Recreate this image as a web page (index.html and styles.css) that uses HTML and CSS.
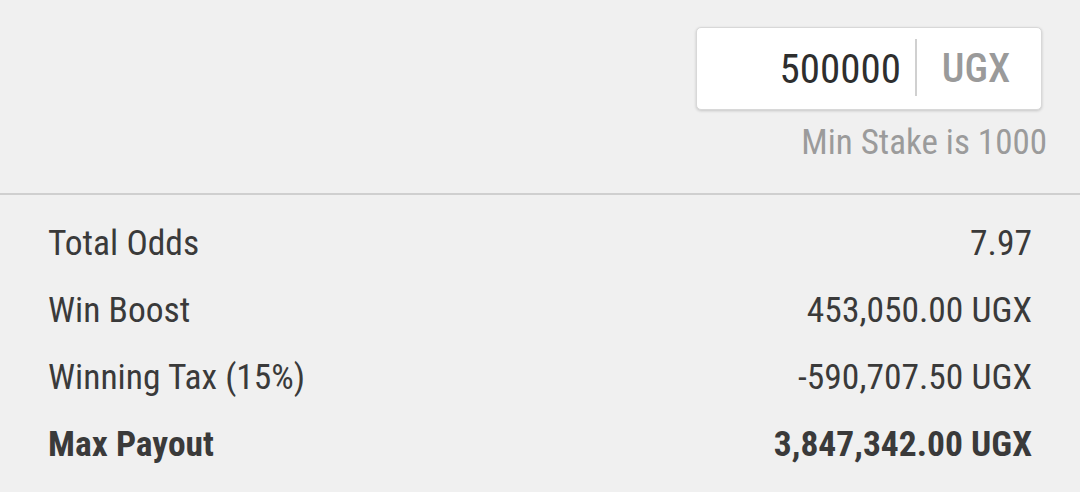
FILE: index.html
```html
<!DOCTYPE html>
<html>
<head>
<meta charset="utf-8">
<link rel="stylesheet" href="styles.css">
</head>
<body>
<div class="stake">
  <div class="stake-box">
    <div class="stake-value">500000</div>
    <div class="stake-sep"></div>
    <div class="stake-cur">UGX</div>
  </div>
  <div class="stake-min">Min Stake is 1000</div>
</div>
<div class="summary">
  <div class="row"><span>Total Odds</span><span>7.97</span></div>
  <div class="row"><span>Win Boost</span><span>453,050.00 UGX</span></div>
  <div class="row"><span>Winning Tax (15%)</span><span>-590,707.50 UGX</span></div>
  <div class="row total"><span>Max Payout</span><span>3,847,342.00 UGX</span></div>
</div>
</body>
</html>
```
FILE: styles.css
```css
html, body {
  margin: 0;
  padding: 0;
  background: #f0f0f0;
  width: 1080px;
  height: 492px;
  overflow: hidden;
  font-family: "Roboto Condensed", "Liberation Sans Narrow", Roboto, sans-serif;
  font-stretch: condensed;
  color: #3a3a3a;
}
.stake {
  display: flex;
  flex-direction: column;
  align-items: flex-end;
  padding: 27px 38px 0 0;
  height: 195px;
  border-bottom: 2px solid #cfcfcf;
  box-sizing: border-box;
}
.stake-box {
  display: flex;
  align-items: center;
  width: 346px;
  height: 83px;
  background: #fff;
  border: 1px solid #d8d8d8;
  border-radius: 5px;
  box-shadow: 0 1px 3px rgba(0,0,0,0.18);
  box-sizing: border-box;
}
.stake-value {
  flex: 1;
  text-align: right;
  font-size: 41px;
  color: #2e2e2e;
  padding-right: 14px;
}
.stake-sep {
  width: 2px;
  height: 57px;
  margin-top: -3px;
  background: #d0d0d0;
}
.stake-cur {
  width: 118px;
  padding-right: 6px;
  text-align: center;
  font-size: 40px;
  font-weight: 500;
  color: #9a9a9a;
}
.stake-min {
  margin-top: 12px;
  margin-right: -5px;
  font-size: 35px;
  color: #9b9b9b;
}
.summary {
  padding: 14px 48px 0 48px;
}
.row {
  display: flex;
  justify-content: space-between;
  height: 67px;
  align-items: center;
  font-size: 35.5px;
}
.row.total {
  font-weight: 700;
}
```
